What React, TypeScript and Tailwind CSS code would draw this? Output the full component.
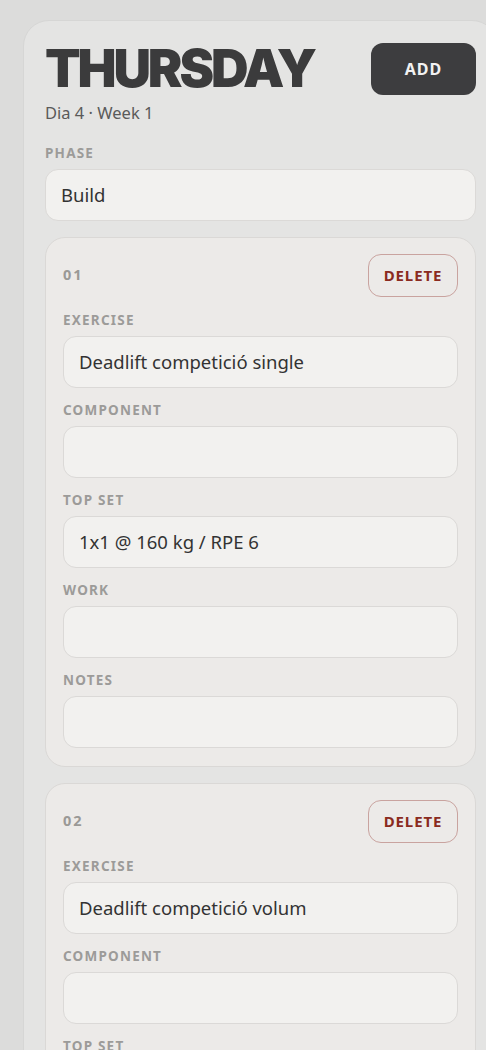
import React from "react";

type Exercise = {
  num: string;
  exercise: string;
  component: string;
  topSet: string;
  work: string;
  notes: string;
};

const exercises: Exercise[] = [
  { num: "01", exercise: "Deadlift competició single", component: "", topSet: "1x1 @ 160 kg / RPE 6", work: "", notes: "" },
  { num: "02", exercise: "Deadlift competició volum", component: "", topSet: "", work: "", notes: "" },
];

const font = { fontFamily: '"Noto Sans", "Open Sans", sans-serif' };

function Label({ children }: { children: React.ReactNode }) {
  return (
    <div className="mb-2 text-[13.5px] leading-4 font-bold uppercase tracking-[0.09em] text-[#9c9b99]">
      {children}
    </div>
  );
}

function Field({ label, value }: { label: string; value: string }) {
  return (
    <div>
      <Label>{label}</Label>
      <div className="flex h-[52px] items-center rounded-[13px] border border-[#dbd9d7] bg-[#f2f1ef] px-[15px] text-[18.5px] text-[#333333]">
        {value}
      </div>
    </div>
  );
}

function ExerciseCard({ item }: { item: Exercise }) {
  return (
    <div className="rounded-[20px] border border-[#dad8d6] bg-[#eceae8] px-[17px] pt-4 pb-[18px]">
      <div className="flex items-center justify-between">
        <span className="text-[14.5px] font-bold tracking-[0.14em] text-[#9a9996]">{item.num}</span>
        <button className="h-[43px] w-[90px] rounded-[13px] border border-[#c9a39f] text-[15px] font-bold tracking-[0.06em] text-[#8a2a20]">
          DELETE
        </button>
      </div>
      <div className="mt-[15px] flex flex-col gap-[14px]">
        <Field label="Exercise" value={item.exercise} />
        <Field label="Component" value={item.component} />
        <Field label="Top set" value={item.topSet} />
        <Field label="Work" value={item.work} />
        <Field label="Notes" value={item.notes} />
      </div>
    </div>
  );
}

export default function App() {
  return (
    <div className="h-[1050px] w-[486px] overflow-hidden bg-[#dcdcdb] pl-[23px] pt-5" style={font}>
      <div className="w-[475px] rounded-[26px] border border-[#d6d6d5] bg-[#e4e4e3] px-[21px] pt-[22px] pb-6">
        <div className="flex items-start justify-between">
          <div>
            <h1
              className="mt-[3px] text-[52px] leading-[46px] font-black tracking-[-0.06em] text-[#3b3b3c]"
              style={{ fontFamily: '"Inter", "Liberation Sans", sans-serif' }}
            >
              THURSDAY
            </h1>
            <p className="mt-[9px] text-[16.5px] text-[#5a5a5a]">Dia 4 · Week 1</p>
          </div>
          <button className="h-[52px] w-[105px] rounded-[12px] bg-[#3d3d3f] text-[16px] font-bold tracking-[0.06em] text-[#f2f2f2]">
            ADD
          </button>
        </div>

        <div className="mt-[19px]">
          <Field label="Phase" value="Build" />
        </div>

        <div className="mt-4 flex flex-col gap-4">
          {exercises.map((e) => (
            <ExerciseCard key={e.num} item={e} />
          ))}
        </div>
      </div>
    </div>
  );
}
